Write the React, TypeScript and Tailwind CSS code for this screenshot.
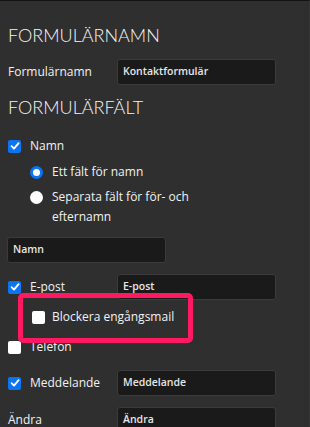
import React from 'react';

const body = { fontFamily: '"Open Sans", "Noto Sans", sans-serif' };
const head = { fontFamily: 'Lato, "Open Sans", sans-serif' };

function Check({ checked }: { checked?: boolean }) {
    // checkbox, blue when checked
    if (checked) {
        return (
            <span className="flex h-[13px] w-[13px] shrink-0 items-center justify-center rounded-[2px] bg-[#0b74f1]">
                <svg width="10" height="10" viewBox="0 0 10 10">
                    <path d="M1.6 5.2 L4 7.6 L8.6 2.2" fill="none" stroke="#fff" strokeWidth="1.9" strokeLinecap="round" strokeLinejoin="round" />
                </svg>
            </span>
        );
    }
    return <span className="block h-[13px] w-[13px] shrink-0 rounded-[2px] bg-white" />;
}

function Radio({ checked }: { checked?: boolean }) {
    if (checked) return <span className="block h-[13px] w-[13px] shrink-0 rounded-full border-[3px] border-[#0b74f1] bg-white" />;
    return <span className="block h-[13px] w-[13px] shrink-0 rounded-full bg-white" />;
}

function Field({ value, className = '' }: { value: string; className?: string }) {
    return (
        <div className={`flex h-[26px] items-center rounded-[3px] border border-[#3b3b3b] bg-[#1a1a1a] px-[5px] text-[10.5px] font-semibold text-[#e6e6e6] ${className}`}>
            {value}
        </div>
    );
}

export default function App() {
    return (
        <div className="relative h-[427px] w-[310px] overflow-hidden border-t border-r border-t-[#131313] border-r-[#363636] bg-[#2f2f2f] pl-2 text-[12px] text-[#f2f2f2]" style={body}>
            <h2 className="mt-[20px] text-[18px] font-light uppercase leading-[28px] text-[#f4f4f4]" style={head}>
                Formulärnamn
            </h2>

            <div className="mt-[10px] flex h-[26px] items-center">
                <span className="w-[109px]">Formulärnamn</span>
                <Field value="Kontaktformulär" className="w-[159px]" />
            </div>

            <h2 className="mt-[8px] text-[18px] font-light uppercase leading-[28px] text-[#f4f4f4]" style={head}>
                Formulärfält
            </h2>

            <label className="mt-[15px] flex h-[20px] items-center gap-[9px]">
                <Check checked />
                <span>Namn</span>
            </label>

            <div className="ml-[22px] mt-[6px] flex h-[20px] items-center gap-[9px]">
                <Radio checked />
                <span>Ett fält för namn</span>
            </div>

            <div className="ml-[22px] mt-[5px] flex items-start gap-[9px] leading-[20px]">
                <span className="mt-[3.5px]">
                    <Radio />
                </span>
                <span className="w-[150px]">Separata fält för för- och efternamn</span>
            </div>

            <Field value="Namn" className="-ml-px mt-[10px] w-[159px]" />

            <div className="mt-[11px] flex h-[26px] items-center">
                <span className="flex w-[109px] items-center gap-[9px]">
                    <Check checked />
                    <span>E-post</span>
                </span>
                <Field value="E-post" className="w-[159px]" />
            </div>

            <div className="ml-[24px] mt-[7px] flex h-[20px] items-center gap-[7px]">
                <Check />
                <span>Blockera engångsmail</span>
            </div>

            <div className="mt-[10px] flex h-[20px] items-center gap-[9px]">
                <Check />
                <span>Telefon</span>
            </div>

            <div className="mt-[13px] flex h-[26px] items-center">
                <span className="flex w-[109px] items-center gap-[9px]">
                    <Check checked />
                    <span>Meddelande</span>
                </span>
                <Field value="Meddelande" className="w-[159px]" />
            </div>

            <div className="mt-[11px] flex h-[26px] items-center">
                <span className="w-[109px]">Ändra</span>
                <Field value="Ändra" className="w-[159px]" />
            </div>

            {/* highlight box drawn over the form */}
            <div className="absolute left-[18px] top-[292px] h-[50px] w-[175px] rounded-[5px] border-[5px] border-[#ff1862]" />
        </div>
    );
}
